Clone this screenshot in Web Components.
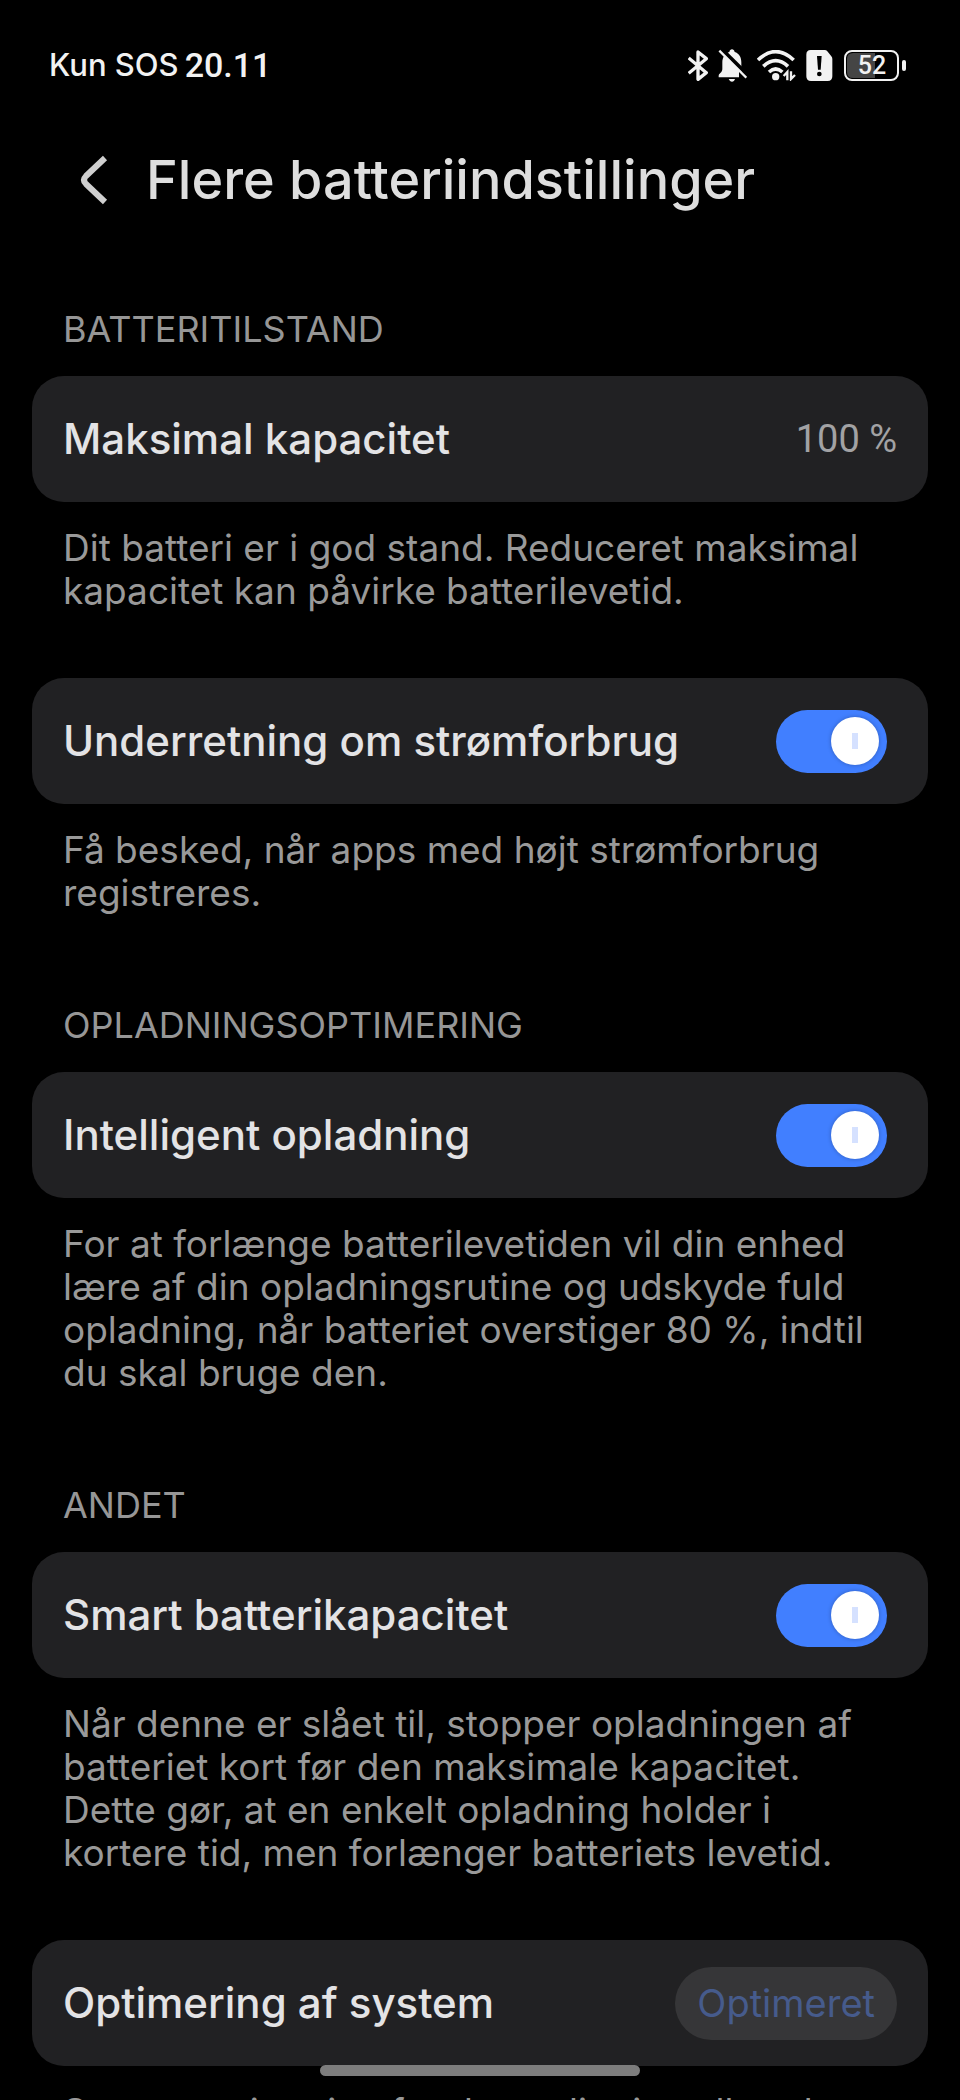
<!DOCTYPE html>
<html lang="da">
<head>
<meta charset="utf-8">
<meta name="viewport" content="width=device-width, initial-scale=1">
<title>Flere batteriindstillinger</title>
<style>
  html, body { margin: 0; height: 100%; background: #000; }
  body { font-family: Inter, "Noto Sans", sans-serif; color: #e3e3e5; overflow: hidden; }
</style>
</head>
<body>
<battery-settings-page></battery-settings-page>

<template id="status-bar">
  <style>
    :host { display: flex; align-items: center; justify-content: space-between; height: 130px; padding: 0 54px 0 49px; box-sizing: border-box; flex: none; color: #f2f2f2; }
    .left { display: flex; align-items: center; gap: 6px; font-size: 31px; font-weight: 500; line-height: 40px; }
    time { font: 500 34px/40px Roboto, sans-serif; }
    .icons { display: flex; align-items: center; gap: 10px; }
    svg { display: block; }
    .battery { display: grid; }
    .battery > * { grid-area: 1 / 1; }
    .battery span { width: 56px; text-align: center; align-self: center; font: 500 25px/31px Roboto, sans-serif; }
  </style>
  <div class="left"><span>Kun SOS</span><time>20.11</time></div>
  <div class="icons">
    <svg width="20" height="31" viewBox="53 43 60 93" fill="none" stroke="#f2f2f2" stroke-width="10" stroke-linejoin="round" role="img" aria-label="Bluetooth"><path d="M55 67 108 111 83 131V49L108 69 55 113"/></svg>
    <svg width="29" height="33" viewBox="145 41 87 99" role="img" aria-label="Lydløs"><path fill="#f2f2f2" d="M147 126v-5c0-3 2-5 5-8 5-4 6-8 6-14V81c0-16 9-27 21-31 1-5 4-8 8-8s7 3 8 8c13 4 20 15 20 31v18c0 6 1 10 6 14 3 3 4 5 4 8v5zM177 131h19c-1 5-5 8-9 8s-8-3-10-8z"/><path d="M153 39 238 123" stroke="#000" stroke-width="12"/><path d="M208 110v19h24v-19z" fill="#000"/><path d="M149 46 230 127" stroke="#f2f2f2" stroke-width="7"/></svg>
    <svg width="39" height="31" viewBox="266 42 117 93" fill="none" stroke="#f2f2f2" stroke-width="11" stroke-linecap="butt" role="img" aria-label="Wi-Fi"><path d="M269 72Q322 22 376 72M285 91Q322 57 359 91M302 108Q322 90 342 108"/><circle cx="322" cy="122" r="11" fill="#f2f2f2" stroke="none"/><path d="M346 120 357 108V133M368 106V129L380 117" stroke-width="7"/></svg>
    <svg width="28" height="31" viewBox="408 42 84 93" role="img" aria-label="SIM-kort advarsel"><path fill="#f2f2f2" d="M422 42h42q5 0 8 4l12 15q3 3 3 8v52q0 14-14 14h-50q-14 0-14-14V56q0-14 13-14z"/><path d="M441 60h14l-3 41h-8z" fill="#000"/><circle cx="448" cy="114" r="7" fill="#000"/></svg>
    <div class="battery">
      <svg width="62" height="31" viewBox="0 0 62 31" aria-hidden="true"><path d="M9 3h22v25H9q-6 0-6-6V9q0-6 6-6z" fill="#454545"/><rect x="1" y="1" width="53" height="29" rx="7" fill="none" stroke="#f2f2f2" stroke-width="2"/><rect x="58" y="10" width="4" height="11" rx="2" fill="#f2f2f2"/></svg>
      <span>52</span>
    </div>
  </div>
</template>

<template id="page-header">
  <style>
    :host { display: flex; align-items: center; height: 100px; padding: 0 64px; flex: none; }
    button { display: grid; place-items: center; width: 60px; height: 60px; padding: 0; border: 0; background: none; color: #cfcfcf; }
    h1 { margin: 0 0 0 22px; font-size: 54px; line-height: 64px; font-weight: 500; color: #dedede; }
  </style>
  <button type="button" aria-label="Tilbage"><svg width="28" height="50" viewBox="0 0 28 50" fill="none" stroke="currentColor" stroke-width="6"><path d="M25 3 6 21Q2 25 6 29L25 47"/></svg></button>
  <h1><slot></slot></h1>
</template>

<template id="settings-section">
  <style>
    :host { display: block; }
    h2 { margin: 0; padding: 24px 31px 25px; font-size: 36px; line-height: 43px; font-weight: 400; color: #969696; }
  </style>
  <h2></h2>
  <slot></slot>
</template>

<template id="settings-item">
  <style>
    :host { display: block; }
    .card { display: flex; align-items: center; justify-content: space-between; min-height: 126px; box-sizing: border-box; padding: 0 31px; border-radius: 32px; background: #212123; }
    .label { font-size: 42px; line-height: 52px; font-weight: 500; }
    p { margin: 0; padding: 24px 48px 66px 31px; font-size: 37px; line-height: 43px; color: #999; }
  </style>
  <div class="card"><label class="label"></label><slot name="control"></slot></div>
  <p><slot></slot></p>
</template>

<template id="toggle-switch">
  <style>
    :host { display: block; margin-right: 10px; }
    input { appearance: none; display: flex; align-items: center; margin: 0; width: 111px; height: 63px; padding: 0 8px; box-sizing: border-box; border-radius: 32px; background: #555; }
    input::before { content: ""; width: 48px; height: 48px; border-radius: 24px; background: linear-gradient(#d5e1ff, #d5e1ff) center / 6px 16px no-repeat, #fff; box-shadow: 0 0 4px #0004; }
    input:checked { background: #417fff; justify-content: flex-end; }
  </style>
  <input type="checkbox" role="switch" checked>
</template>

<template id="value-text">
  <style>:host { display: block; font: 400 38px/43px Roboto, sans-serif; color: #a2a2a4; }</style>
  <slot></slot>
</template>

<template id="pill-button">
  <style>
    :host { display: block; }
    button { height: 73px; padding: 0 22px; border: 0; border-radius: 37px; background: #363638; color: #465b8c; font: 400 38px/43px Inter, sans-serif; }
  </style>
  <button type="button" disabled><slot></slot></button>
</template>

<template id="battery-settings-page">
  <style>
    :host { display: flex; flex-direction: column; height: 100vh; }
    main { flex: 1; min-height: 0; overflow-y: auto; scrollbar-width: none; padding: 54px 32px 0; }
    .home { position: fixed; left: 50%; bottom: 24px; width: 320px; height: 11px; margin-left: -160px; border-radius: 6px; background: #7d7d7d; }
  </style>
  <status-bar></status-bar>
  <page-header>Flere batteriindstillinger</page-header>
  <main>
    <settings-section heading="BATTERITILSTAND">
      <settings-item label="Maksimal kapacitet"><value-text slot="control">100 %</value-text>Dit batteri er i god stand. Reduceret maksimal kapacitet kan påvirke batterilevetid.</settings-item>
      <settings-item label="Underretning om strømforbrug"><toggle-switch slot="control" label="Underretning om strømforbrug"></toggle-switch>Få besked, når apps med højt strømforbrug registreres.</settings-item>
    </settings-section>
    <settings-section heading="OPLADNINGSOPTIMERING">
      <settings-item label="Intelligent opladning"><toggle-switch slot="control" label="Intelligent opladning"></toggle-switch>For at forlænge batterilevetiden vil din enhed lære af din opladningsrutine og udskyde fuld opladning, når batteriet overstiger 80 %, indtil du skal bruge den.</settings-item>
    </settings-section>
    <settings-section heading="ANDET">
      <settings-item label="Smart batterikapacitet"><toggle-switch slot="control" label="Smart batterikapacitet"></toggle-switch>Når denne er slået til, stopper opladningen af batteriet kort før den maksimale kapacitet. Dette gør, at en enkelt opladning holder i kortere tid, men forlænger batteriets levetid.</settings-item>
      <settings-item label="Optimering af system"><pill-button slot="control">Optimeret</pill-button>Systemoptimering for den nyligt installerede</settings-item>
    </settings-section>
  </main>
  <div class="home"></div>
</template>

<script>
  class TemplateElement extends HTMLElement {
    constructor() {
      super();
      this.attachShadow({ mode: 'open' }).append(document.getElementById(this.localName).content.cloneNode(true));
    }
  }
  customElements.define('status-bar', class extends TemplateElement {});
  customElements.define('page-header', class extends TemplateElement {});
  customElements.define('value-text', class extends TemplateElement {});
  customElements.define('pill-button', class extends TemplateElement {});
  customElements.define('toggle-switch', class extends TemplateElement {
    connectedCallback() {
      this.input = this.shadowRoot.querySelector('input');
      this.input.setAttribute('aria-label', this.getAttribute('label'));
    }
  });
  customElements.define('settings-section', class extends TemplateElement {
    connectedCallback() {
      this.shadowRoot.querySelector('h2').textContent = this.getAttribute('heading');
    }
  });
  customElements.define('settings-item', class extends TemplateElement {
    connectedCallback() {
      const label = this.shadowRoot.querySelector('label');
      label.textContent = this.getAttribute('label');
      label.onclick = () => this.querySelector('toggle-switch')?.input.click();
    }
  });
  customElements.define('battery-settings-page', class extends TemplateElement {});
</script>
</body>
</html>
